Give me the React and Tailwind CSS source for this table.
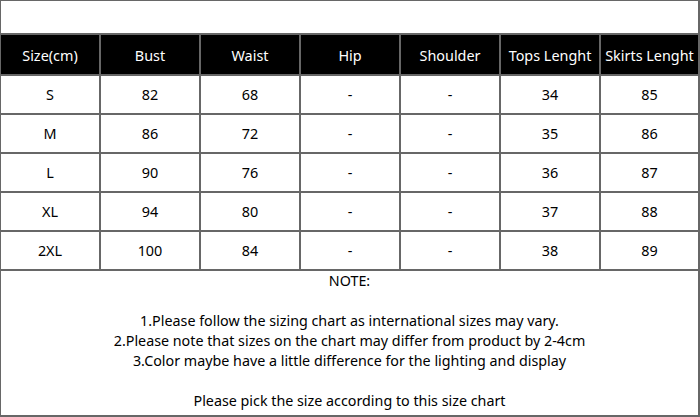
import React from "react";

const headers = ["Size(cm)", "Bust", "Waist", "Hip", "Shoulder", "Tops Lenght", "Skirts Lenght"];
const rows = [
  ["S", "82", "68", "-", "-", "34", "85"],
  ["M", "86", "72", "-", "-", "35", "86"],
  ["L", "90", "76", "-", "-", "36", "87"],
  ["XL", "94", "80", "-", "-", "37", "88"],
  ["2XL", "100", "84", "-", "-", "38", "89"],
];

export default function App() {
  return (
    <div
      className="w-[700px] h-[417px] bg-[#676767] pt-px pl-px pr-[2px] pb-[2px] text-black"
      style={{ fontFamily: '"Noto Sans", "Open Sans", sans-serif' }}
    >
      <div className="grid h-full grid-cols-[98px_98px_98px_98px_98px_98px_97px] grid-rows-[32px_39px_37px_37px_37px_37px_37px_144px] gap-[2px]">
        <div className="col-span-7 bg-white" />
        {headers.map((h) => (
          <div key={h} className="flex items-center justify-center bg-black pt-[3px] text-[14.4px] text-white">
            {h}
          </div>
        ))}
        {rows.map((r) =>
          r.map((c, i) => (
            <div key={r[0] + i} className="flex items-center justify-center bg-white pt-px text-[14.4px]">
              {c}
            </div>
          ))
        )}
        <div className="col-span-7 flex flex-col items-center bg-white text-[14.3px] leading-[20px]">
          <p>NOTE:</p>
          <p>&nbsp;</p>
          <p>1.Please follow the sizing chart as international sizes may vary.</p>
          <p>2.Please note that sizes on the chart may differ from product by 2-4cm</p>
          <p>3.Color maybe have a little difference for the lighting and display</p>
          <p>&nbsp;</p>
          <p>Please pick the size according to this size chart</p>
        </div>
      </div>
    </div>
  );
}
